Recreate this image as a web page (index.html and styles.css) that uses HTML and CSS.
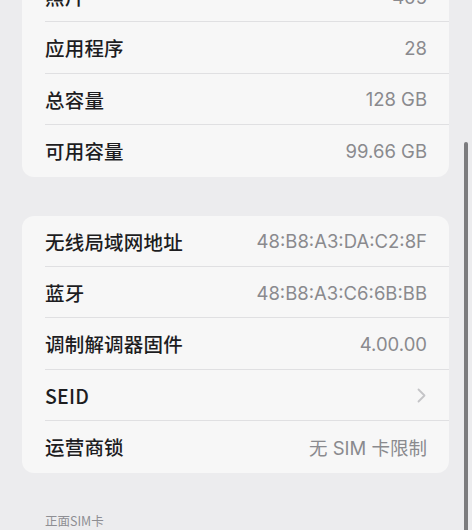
FILE: index.html
```html
<!DOCTYPE html>
<html lang="zh">
<head>
<meta charset="utf-8">
<link rel="stylesheet" href="styles.css">
</head>
<body>
<div class="page">
  <div class="card first">
    <div class="row"><span class="label">照片</span><span class="value">405</span></div>
    <div class="row"><span class="label">应用程序</span><span class="value">28</span></div>
    <div class="row"><span class="label">总容量</span><span class="value">128 GB</span></div>
    <div class="row"><span class="label">可用容量</span><span class="value">99.66 GB</span></div>
  </div>
  <div class="card">
    <div class="row"><span class="label">无线局域网地址</span><span class="value">48:B8:A3:DA:C2:8F</span></div>
    <div class="row"><span class="label">蓝牙</span><span class="value">48:B8:A3:C6:6B:BB</span></div>
    <div class="row"><span class="label">调制解调器固件</span><span class="value">4.00.00</span></div>
    <div class="row"><span class="label">SEID</span><span class="chev"><svg width="9" height="15" viewBox="0 0 9 15"><path d="M1.5 1.5 L7.5 7.5 L1.5 13.5" fill="none" stroke="#c4c4c7" stroke-width="1.8" stroke-linecap="round" stroke-linejoin="round"/></svg></span></div>
    <div class="row"><span class="label">运营商锁</span><span class="value">无 SIM 卡限制</span></div>
  </div>
  <div class="section">正面SIM卡</div>
</div>
<div class="scrollbar"></div>
</body>
</html>
```
FILE: styles.css
```css
html, body {
  margin: 0;
  padding: 0;
  background: #ececee;
  width: 472px;
  height: 530px;
  overflow: hidden;
  font-family: "Inter", "Noto Sans CJK SC", sans-serif;
  -webkit-font-smoothing: antialiased;
}
.page {
  padding: 0 23px 0 22px;
  margin-top: -29px;
}
.card {
  background: #f7f7f7;
  border-radius: 12px;
  margin-bottom: 39px;
  overflow: hidden;
}
.row {
  height: 51.4px;
  margin-left: 23px;
  padding-right: 22px;
  display: flex;
  align-items: center;
  justify-content: space-between;
  box-shadow: inset 0 -1px 0 #e0e0e2;
}
.row:last-child {
  box-shadow: none;
}
.label {
  font-size: 19.5px;
  line-height: 1;
  font-weight: 500;
  color: #1d1d1f;
  font-family: "Noto Sans CJK SC", "Inter", sans-serif;
  letter-spacing: 0.2px;
}
.value {
  font-size: 18.5px;
  color: #8a8a8e;
  font-family: "Inter", "Noto Sans CJK SC", sans-serif;
}
.chev {
  display: flex;
  align-items: center;
  margin-right: 1px;
}
.section {
  margin-left: 23px;
  margin-top: -1px;
  font-size: 12.5px;
  color: #8e8e93;
  font-family: "Noto Sans CJK SC", sans-serif;
}
.scrollbar {
  position: absolute;
  left: 464px;
  top: 142px;
  width: 4px;
  height: 400px;
  background: #7c7c7e;
  border-radius: 2px;
}
```
